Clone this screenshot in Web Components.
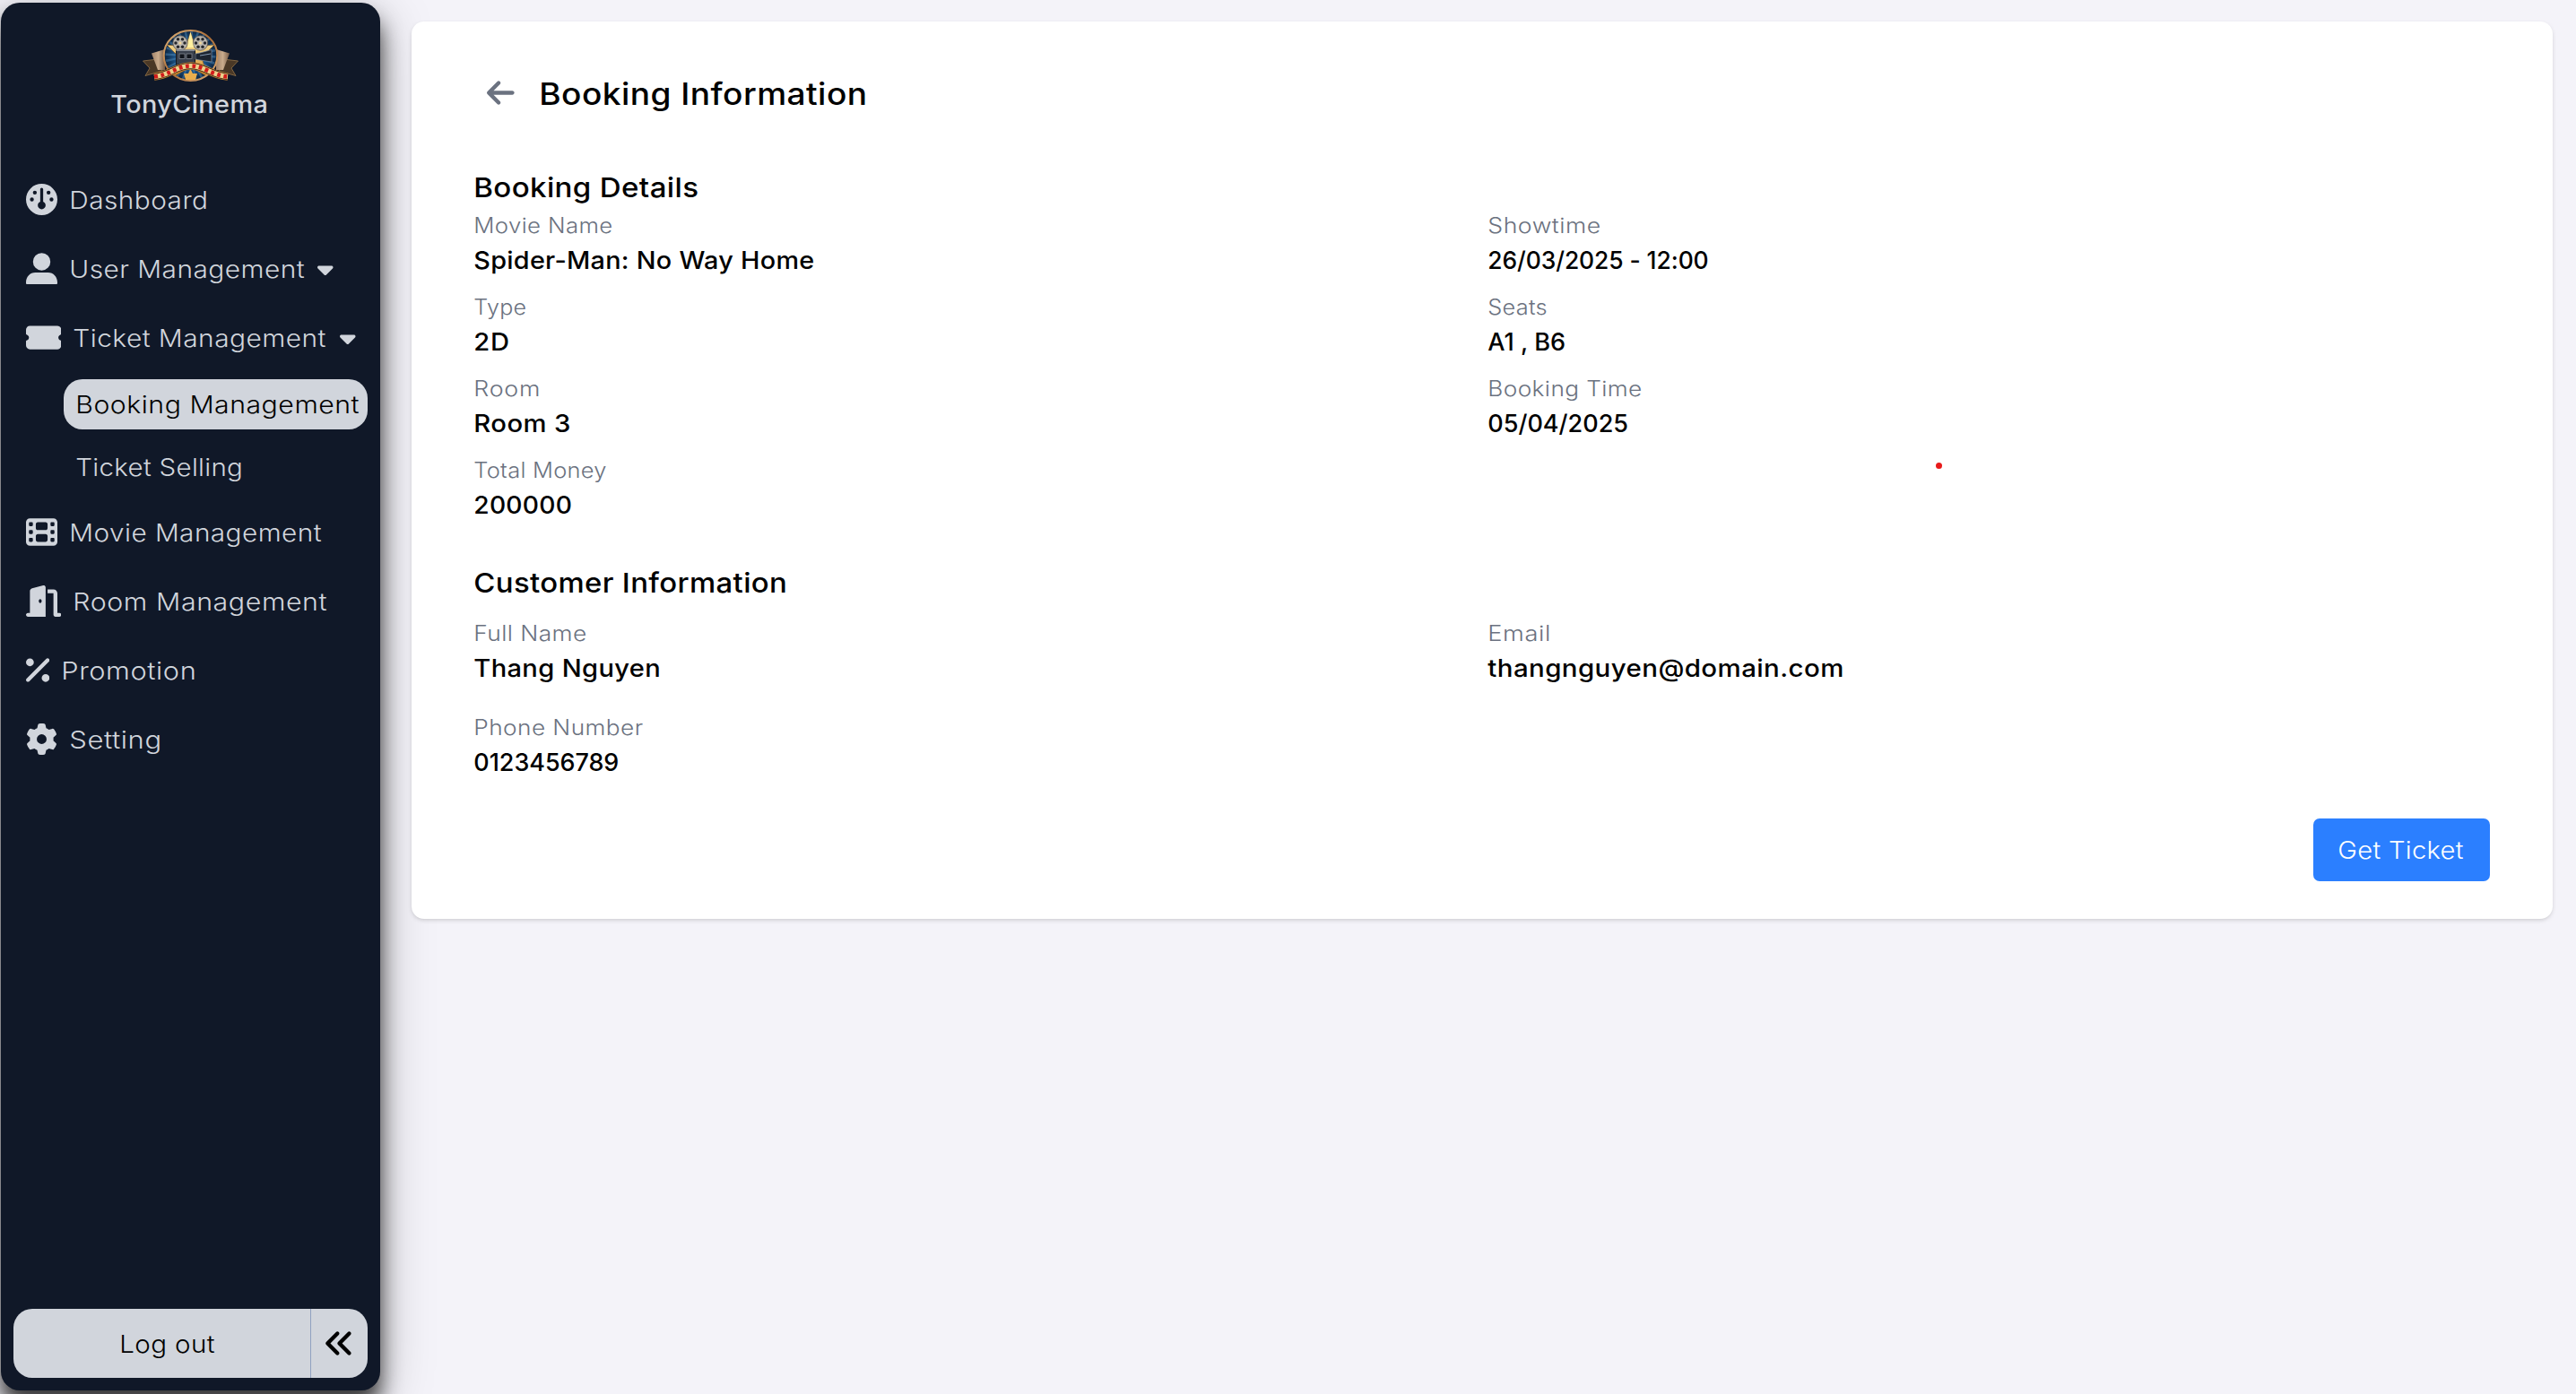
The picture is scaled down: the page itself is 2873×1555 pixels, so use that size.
<!DOCTYPE html>
<html lang="en">
<head>
<meta charset="utf-8">
<title>TonyCinema - Booking Information</title>
<style>
html,body{margin:0;height:100%;overflow:hidden}
body{background:#f4f3f9;font-family:Inter,"Liberation Sans",sans-serif;color:#000}
</style>
</head>
<body>
<cinema-app></cinema-app>
<script>
const ICONS = {
gauge:[512,"M0 256a256 256 0 1 1 512 0A256 256 0 1 1 0 256zm320 96c0-26.9-16.5-49.9-40-59.3V88c0-13.3-10.7-24-24-24s-24 10.7-24 24V292.7c-23.5 9.5-40 32.5-40 59.3c0 35.3 28.7 64 64 64s64-28.7 64-64zM144 176a32 32 0 1 0 0-64 32 32 0 1 0 0 64zm-16 80a32 32 0 1 0 -64 0 32 32 0 1 0 64 0zm288 32a32 32 0 1 0 0-64 32 32 0 1 0 0 64zM400 144a32 32 0 1 0 -64 0 32 32 0 1 0 64 0z"],
user:[512,"M256 2a142 143 0 1 0 0 286a142 143 0 1 0 0-286zM0 484C0 390 65 322 152 322H360C447 322 512 390 512 484V498Q512 512 498 512H14Q0 512 0 498z"],
ticket:[576,"M64 64C28.7 64 0 92.7 0 128v64c0 8.8 7.4 15.7 15.7 18.6C34.5 217.1 48 235 48 256s-13.5 38.9-32.3 45.4C7.4 304.3 0 311.2 0 320v64c0 35.3 28.7 64 64 64H512c35.3 0 64-28.7 64-64V320c0-8.8-7.4-15.7-15.7-18.6C541.5 294.9 528 277 528 256s13.5-38.9 32.3-45.4c8.3-2.9 15.7-9.8 15.7-18.6V128c0-35.3-28.7-64-64-64H64z"],
film:[512,"M0 96C0 60.7 28.7 32 64 32H448c35.3 0 64 28.7 64 64V416c0 35.3-28.7 64-64 64H64c-35.3 0-64-28.7-64-64V96zM48 368v32c0 8.8 7.2 16 16 16H96c8.8 0 16-7.2 16-16V368c0-8.8-7.2-16-16-16H64c-8.8 0-16 7.2-16 16zm368-16c-8.8 0-16 7.2-16 16v32c0 8.8 7.2 16 16 16h32c8.8 0 16-7.2 16-16V368c0-8.8-7.2-16-16-16H416zM48 240v32c0 8.8 7.2 16 16 16H96c8.8 0 16-7.2 16-16V240c0-8.8-7.2-16-16-16H64c-8.8 0-16 7.2-16 16zm368-16c-8.8 0-16 7.2-16 16v32c0 8.8 7.2 16 16 16h32c8.8 0 16-7.2 16-16V240c0-8.8-7.2-16-16-16H416zM48 112v32c0 8.8 7.2 16 16 16H96c8.8 0 16-7.2 16-16V112c0-8.8-7.2-16-16-16H64c-8.8 0-16 7.2-16 16zM416 96c-8.8 0-16 7.2-16 16v32c0 8.8 7.2 16 16 16h32c8.8 0 16-7.2 16-16V112c0-8.8-7.2-16-16-16H416zM160 128v64c0 17.7 14.3 32 32 32H320c17.7 0 32-14.3 32-32V128c0-17.7-14.3-32-32-32H192c-17.7 0-32 14.3-32 32zm32 160c-17.7 0-32 14.3-32 32v64c0 17.7 14.3 32 32 32H320c17.7 0 32-14.3 32-32V320c0-17.7-14.3-32-32-32H192z"],
door:[576,"M320 32c0-9.9-4.5-19.2-12.3-25.2S289.8-1.4 280.2 1l-179.9 45C79 51.3 64 70.5 64 92.5V448H32c-17.7 0-32 14.3-32 32s14.3 32 32 32H96 288h32V480 32zM256 256c0 17.7-10.7 32-24 32s-24-14.3-24-32s10.7-32 24-32s24 14.3 24 32zm96-128h96V480c0 17.7 14.3 32 32 32h64c17.7 0 32-14.3 32-32s-14.3-32-32-32H512V128c0-35.3-28.7-64-64-64H352v64z"],
percent:[384,"M374.6 118.6c12.5-12.5 12.5-32.8 0-45.3s-32.8-12.5-45.3 0l-320 320c-12.5 12.5-12.5 32.8 0 45.3s32.8 12.5 45.3 0l320-320zM128 128A64 64 0 1 0 0 128a64 64 0 1 0 128 0zM384 384a64 64 0 1 0 -128 0 64 64 0 1 0 128 0z"],
gear:[512,"M495.9 166.6c3.2 8.7 .5 18.4-6.4 24.6l-43.3 39.4c1.1 8.3 1.7 16.8 1.7 25.4s-.6 17.1-1.7 25.4l43.3 39.4c6.9 6.2 9.6 15.9 6.4 24.6c-4.4 11.9-9.7 23.3-15.8 34.3l-4.7 8.1c-6.6 11-14 21.4-22.1 31.2c-5.9 7.2-15.7 9.6-24.5 6.8l-55.7-17.7c-13.4 10.3-28.2 18.9-44 25.4l-12.5 57.1c-2 9.1-9 16.3-18.2 17.8c-13.8 2.3-28 3.5-42.5 3.5s-28.7-1.2-42.5-3.5c-9.2-1.5-16.2-8.7-18.2-17.8l-12.5-57.1c-15.8-6.5-30.6-15.1-44-25.4L83.1 425.9c-8.8 2.8-18.6 .3-24.5-6.8c-8.1-9.8-15.5-20.2-22.1-31.2l-4.7-8.1c-6.1-11-11.4-22.4-15.8-34.3c-3.2-8.7-.5-18.4 6.4-24.6l43.3-39.4C64.6 273.1 64 264.6 64 256s.6-17.1 1.7-25.4L22.4 191.2c-6.9-6.2-9.6-15.9-6.4-24.6c4.4-11.9 9.7-23.3 15.8-34.3l4.7-8.1c6.6-11 14-21.4 22.1-31.2c5.9-7.2 15.7-9.6 24.5-6.8l55.7 17.7c13.4-10.3 28.2-18.9 44-25.4l12.5-57.1c2-9.1 9-16.3 18.2-17.8C227.3 1.2 241.5 0 256 0s28.7 1.2 42.5 3.5c9.2 1.5 16.2 8.7 18.2 17.8l12.5 57.1c15.8 6.5 30.6 15.1 44 25.4l55.7-17.7c8.8-2.8 18.6-.3 24.5 6.8c8.1 9.8 15.5 20.2 22.1 31.2l4.7 8.1c6.1 11 11.4 22.4 15.8 34.3zM256 336a80 80 0 1 0 0-160 80 80 0 1 0 0 160z"],
caret:[320,"M137.4 374.6c12.5 12.5 32.8 12.5 45.3 0l128-128c9.2-9.2 11.9-22.9 6.9-34.9s-16.6-19.8-29.6-19.8L32 192c-12.9 0-24.6 7.8-29.6 19.8s-2.2 25.7 6.9 34.9l128 128z"],
angles:[512,"M41.4 233.4c-12.5 12.5-12.5 32.8 0 45.3l160 160c12.5 12.5 32.8 12.5 45.3 0s12.5-32.8 0-45.3L109.3 256 246.6 118.6c12.5-12.5 12.5-32.8 0-45.3s-32.8-12.5-45.3 0l-160 160zm352-160l-160 160c-12.5 12.5-12.5 32.8 0 45.3l160 160c12.5 12.5 32.8 12.5 45.3 0s12.5-32.8 0-45.3L301.3 256 438.6 118.6c12.5-12.5 12.5-32.8 0-45.3s-32.8-12.5-45.3 0z"],
arrow:[448,"M9.4 233.4c-12.5 12.5-12.5 32.8 0 45.3l160 160c12.5 12.5 32.8 12.5 45.3 0s12.5-32.8 0-45.3L109.2 288 416 288c17.7 0 32-14.3 32-32s-14.3-32-32-32l-306.7 0L214.6 118.6c12.5-12.5 12.5-32.8 0-45.3s-32.8-12.5-45.3 0l-160 160z"]
};

customElements.define('app-icon', class extends HTMLElement {
  connectedCallback() {
    const [w, d] = ICONS[this.getAttribute('name')];
    const size = +(this.getAttribute('size') || 35);
    this.attachShadow({mode:'open'}).innerHTML = `<style>:host{display:block;flex:none}svg{display:block}</style>
<svg width="${w / 512 * size}" height="${size}" viewBox="0 0 ${w} 512" fill="currentColor"><path fill-rule="evenodd" d="${d}"/></svg>`;
  }
});

/* One line of text whose glyphs and tracking are stretched to the width in "w". */
customElements.define('ui-text', class extends HTMLElement {
  connectedCallback() {
    const size = +(this.getAttribute('size') || 27);
    const weight = this.getAttribute('weight') || 350;
    const line = +(this.getAttribute('line') || 42);
    const text = this.textContent.trim(), w = +this.getAttribute('w') - 1;
    const drop = line === 42 ? 1 : 0;
    const c = document.createElement('canvas').getContext('2d');
    c.font = `${weight} ${size}px Inter`;
    const m = c.measureText(text);
    const ink = m.actualBoundingBoxRight + m.actualBoundingBoxLeft;
    const s = Math.pow(w / ink, .8), ls = (w / s - ink) / Math.max(1, text.length - 1);
    this.attachShadow({mode:'open'}).innerHTML = `<style>
:host{display:block;flex:none;width:${w + 4}px;height:${line}px}
span{display:inline-block;white-space:pre;transform-origin:0 0;transform:translate(-.7px,${drop}px) scaleX(${s.toFixed(4)});
font-size:${size}px;font-weight:${weight};line-height:${line}px;letter-spacing:${ls.toFixed(3)}px}
</style><span><slot></slot></span>`;
  }
});

customElements.define('brand-logo', class extends HTMLElement {
  connectedCallback() {
    const reel = (x, y) => `<circle cx="${x}" cy="${y}" r="8.2" fill="#b9b4ac" stroke="#55514d" stroke-width=".8"/>` +
      [0,60,120,180,240,300].map(a => `<circle cx="${x + 5 * Math.cos(a * Math.PI / 180)}" cy="${y + 5 * Math.sin(a * Math.PI / 180)}" r="1.75" fill="#25262b"/>`).join('') +
      `<circle cx="${x}" cy="${y}" r="1.5" fill="#f1d69a"/>`;
    const rays = Array.from({length:24}, (_, i) => { const a = i * 15 * Math.PI / 180, b = a + .1;
      return `<path d="M53.5 29L${53.5 + 28 * Math.cos(a)} ${29 + 28 * Math.sin(a)}L${53.5 + 28 * Math.cos(b)} ${29 + 28 * Math.sin(b)}z"/>`; }).join('');
    const band = 'M13 52.5C30 51 38 40.5 53.5 40.5S77 51 95 52.5';
    this.attachShadow({mode:'open'}).innerHTML = `<style>:host{display:block}svg{display:block}</style>
<svg width="107" height="58" viewBox="0 0 107 58">
<defs>
<radialGradient id="b"><stop offset="0" stop-color="#3d8fd0"/><stop offset=".6" stop-color="#1c5386"/><stop offset="1" stop-color="#0c2440"/></radialGradient>
<linearGradient id="r" x1="0" y1="0" x2="1" y2="1"><stop offset="0" stop-color="#e2b67d"/><stop offset=".5" stop-color="#a86a35"/><stop offset="1" stop-color="#e0b27a"/></linearGradient>
<linearGradient id="t" x1="0" x2="1"><stop offset="0" stop-color="#a08269"/><stop offset=".5" stop-color="#c9ab8c"/><stop offset="1" stop-color="#765a45"/></linearGradient>
<linearGradient id="g" x1="0" y1="0" x2="0" y2="1"><stop offset="0" stop-color="#fff3b0"/><stop offset="1" stop-color="#d08b2c"/></linearGradient>
</defs>
<g fill="#4a3826" stroke="#8a6c45" stroke-width=".9">
<path d="M.5 35L17 33L22 46L12 49L3 51.5L8 43z"/><path d="M106.5 35L90 33L85 46L95 49L104 51.5L99 43z"/></g>
<path d="M10 26.5L25 22L25 45L17 45z" fill="url(#t)"/><path d="M97 26.5L82 22L82 45L90 45z" fill="url(#t)"/>
<ellipse cx="53.5" cy="29" rx="29.3" ry="27.8" fill="url(#b)"/>
<g fill="#72b6e6" opacity=".3">${rays}</g>
<path d="M53.5 3L59 19L80 17L66 31L72 52L53.5 42L35 52L41 31L27 17L48 19z" fill="url(#g)" stroke="#794914" stroke-width=".6"/>
<ellipse cx="53.5" cy="29" rx="29.8" ry="28" fill="none" stroke="url(#r)" stroke-width="2"/>
${reel(42, 15)}${reel(64.5, 15)}
<path d="M53.5 2L57 20H50z" fill="#fff0a0"/>
<rect x="37.5" y="23" width="21" height="16" fill="#39404c" stroke="#14181f"/>
<rect x="37.5" y="22.3" width="21" height="1.6" fill="#8f959e"/>
<rect x="41" y="27" width="6" height="5.5" fill="#11151c" stroke="#8f949d" stroke-width=".7"/><rect x="49" y="27" width="6" height="5.5" fill="#11151c" stroke="#8f949d" stroke-width=".7"/>
<path d="M59 27L64 26L77 22.5V36L64 34L59 33z" fill="#1c2430" stroke="#7e8ca0" stroke-width=".7"/><path d="M64 29L76 27" stroke="#8498b0"/>
<path d="M53.5 44L56 49L61 49L59 56H48L46 49L51 49z" fill="#e9ae4d"/>
<g fill="none"><path d="${band}" stroke="#b4772f" stroke-width="8.6"/>
<path d="${band}" stroke="#3b2412" stroke-width="7"/>
<path d="${band}" stroke="#ecd08a" stroke-width="5.6"/>
<path d="${band}" stroke="#d11b1b" stroke-width="4.6" stroke-dasharray="3.8 3.6"/></g>
</svg>`;
  }
});

customElements.define('nav-item', class extends HTMLElement {
  connectedCallback() {
    this.attachShadow({mode:'open'}).innerHTML = `<style>:host{display:flex;align-items:center;height:77px;padding-left:14px;gap:14px}
app-icon[name=caret]{margin-left:-2px}</style>
<app-icon name="${this.getAttribute('icon')}"></app-icon><ui-text w="${this.getAttribute('w')}">${this.getAttribute('label')}</ui-text>
${this.hasAttribute('open-menu') ? '<app-icon name="caret" size="28"></app-icon>' : ''}`;
  }
});

customElements.define('nav-sub', class extends HTMLElement {
  connectedCallback() {
    this.attachShadow({mode:'open'}).innerHTML = `<style>:host{display:flex;align-items:center;height:56px;margin-left:56px;padding-left:14px;border-radius:21px;box-sizing:border-box}
:host([active]){background:#d1d5dc;color:#000}</style><slot></slot>`;
  }
});

customElements.define('side-bar', class extends HTMLElement {
  connectedCallback() {
    this.attachShadow({mode:'open'}).innerHTML = `<style>
:host{display:flex;flex-direction:column;box-sizing:border-box;width:423px;height:1548px;margin:3px 0 0 1px;padding:30px 14px 14px;border-radius:21px;background:#101828;color:#d1d5dc;flex:none;
box-shadow:0 18px 23px rgba(0,0,0,.72),0 14px 60px rgba(0,0,0,.27)}
.brand{display:flex;flex-direction:column;align-items:center;gap:4px;margin-bottom:47px}
nav{flex:1}
.sub{display:flex;flex-direction:column;gap:14px;padding:8px 0 6px}
.foot{display:flex;height:77px;border-radius:21px;background:#d1d5dc;color:#000}
.out{flex:1;display:flex;align-items:center;justify-content:center;padding-left:14px;border-right:1px solid #90a1c0}
.fold{width:63px;box-sizing:border-box;display:flex;align-items:center;padding-left:14px}
</style>
<div class="brand"><brand-logo></brand-logo><ui-text w="174" weight="500">TonyCinema</ui-text></div>
<nav>
<nav-item icon="gauge" label="Dashboard" w="151"></nav-item>
<nav-item icon="user" label="User Management" w="261" open-menu></nav-item>
<nav-item icon="ticket" label="Ticket Management" w="282" open-menu></nav-item>
<div class="sub"><nav-sub active><ui-text w="315">Booking Management</ui-text></nav-sub><nav-sub><ui-text w="184">Ticket Selling</ui-text></nav-sub></div>
<nav-item icon="film" label="Movie Management" w="280"></nav-item>
<nav-item icon="door" label="Room Management" w="282"></nav-item>
<nav-item icon="percent" label="Promotion" w="147"></nav-item>
<nav-item icon="gear" label="Setting" w="100"></nav-item>
</nav>
<div class="foot"><div class="out"><ui-text w="105">Log out</ui-text></div><div class="fold"><app-icon name="angles"></app-icon></div></div>`;
  }
});

customElements.define('info-field', class extends HTMLElement {
  connectedCallback() {
    const a = n => this.getAttribute(n);
    this.attachShadow({mode:'open'}).innerHTML = `<style>:host{display:block;height:77px}.l{color:#6b7280}</style>
<ui-text class="l" size="23.6" line="35" weight="300" w="${a('lw')}">${a('label')}</ui-text><ui-text weight="500" w="${a('vw')}">${a('value')}</ui-text>`;
  }
});

customElements.define('booking-card', class extends HTMLElement {
  connectedCallback() {
    this.attachShadow({mode:'open'}).innerHTML = `<style>
:host{display:block;box-sizing:border-box;width:2388px;height:1001px;margin:24px 0 0 35px;padding:56px 70px 42px;border-radius:14px;background:#fff;flex:none;
box-shadow:0 2px 5px rgba(0,0,0,.1),0 2px 4px -2px rgba(0,0,0,.1)}
header{display:flex;align-items:center;height:49px;padding-left:14px;gap:28px;margin-bottom:55.6px}
app-icon{color:#6b7280;margin-bottom:2px}
.grid{display:grid;grid-template-columns:1fr 1fr;column-gap:14px;row-gap:14px}
.second{margin-top:42px}
.second .grid{row-gap:28px;margin-top:14px}
.actions{display:flex;justify-content:flex-end;margin-top:42px}
button{border:0;padding:0 0 0 28px;width:197px;height:70px;border-radius:7px;background:#2b7fff;color:#fff;font-family:inherit;text-align:left}
</style>
<header><app-icon name="arrow"></app-icon><ui-text size="33.8" weight="500" line="49" w="362">Booking Information</ui-text></header>
<section><ui-text size="30.4" weight="500" line="49" w="248">Booking Details</ui-text>
<div class="grid">
<info-field label="Movie Name" lw="153" value="Spider-Man: No Way Home" vw="379"></info-field>
<info-field label="Showtime" lw="125" value="26/03/2025 - 12:00" vw="245"></info-field>
<info-field label="Type" lw="58" value="2D" vw="38"></info-field>
<info-field label="Seats" lw="65" value="A1 , B6" vw="87"></info-field>
<info-field label="Room" lw="71" value="Room 3" vw="106"></info-field>
<info-field label="Booking Time" lw="170" value="05/04/2025" vw="156"></info-field>
<info-field label="Total Money" lw="148" value="200000" vw="108"></info-field>
</div></section>
<section class="second"><ui-text size="30.4" weight="500" line="49" w="348">Customer Information</ui-text>
<div class="grid">
<info-field label="Full Name" lw="124" value="Thang Nguyen" vw="207"></info-field>
<info-field label="Email" lw="67" value="thangnguyen@domain.com" vw="397"></info-field>
<info-field label="Phone Number" lw="187" value="0123456789" vw="161"></info-field>
</div></section>
<div class="actions"><button><ui-text w="140">Get Ticket</ui-text></button></div>`;
  }
});

customElements.define('cinema-app', class extends HTMLElement {
  connectedCallback() {
    this.attachShadow({mode:'open'}).innerHTML = `<style>
:host{display:flex;align-items:flex-start;position:relative;width:2873px;height:1555px;overflow:hidden}
booking-card{position:relative}
.pointer{position:absolute;left:2159px;top:516px;width:7px;height:7px;border-radius:50%;background:#e81a1a}
</style><side-bar></side-bar><booking-card></booking-card><i class="pointer"></i>`;
  }
});
</script>
</body>
</html>
